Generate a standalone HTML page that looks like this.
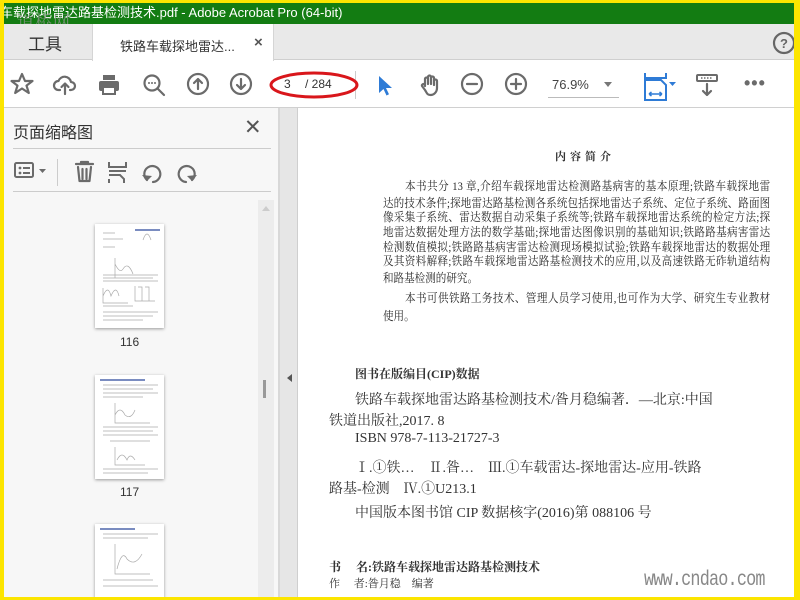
<!DOCTYPE html>
<html><head><meta charset="utf-8"><style>
*{margin:0;padding:0;box-sizing:border-box}
body{width:800px;height:600px;overflow:hidden;background:#fce500;position:relative;font-family:"Liberation Sans","Noto Sans CJK SC",sans-serif}
.a{position:absolute}
.serif{font-family:"Liberation Serif","Noto Serif CJK SC",serif;color:#333}
.ln{position:absolute;left:383px;width:440px;font-size:12px;white-space:nowrap;text-align:justify;text-align-last:justify;font-family:"Liberation Serif","Noto Serif CJK SC",serif;color:#2a2a2a;transform:scaleX(.88);transform-origin:left top}
svg{position:absolute;overflow:visible}
.ic{fill:none;stroke:#6b6b6b;stroke-width:2.2;stroke-linecap:round;stroke-linejoin:round}
</style></head><body>
<div class="a" style="left:4px;top:3px;width:790px;height:594px;background:#fff;overflow:hidden">
 <div class="a" style="left:-4px;top:0;width:794px;height:21px;background:#137c12;color:#fff;font-size:13px;line-height:20px;white-space:nowrap">车载探地雷达路基检测技术.pdf - Adobe Acrobat Pro (64-bit)</div>
 <div class="a" style="left:13px;top:5px;font-size:17px;color:rgba(150,150,150,.75);letter-spacing:1px;font-family:'Noto Serif CJK SC',serif">道桥网</div>
 <div class="a" style="left:0;top:21px;width:790px;height:36px;background:#e9e9e9;border-bottom:1px solid #cfcfcf"></div>
 <div class="a" style="left:24px;top:27px;font-size:17px;color:#333">工具</div>
 <div class="a" style="left:88px;top:21px;width:182px;height:37px;background:#fff;border-left:1px solid #d5d5d5;border-right:1px solid #d5d5d5"></div>
 <div class="a" style="left:116px;top:33px;font-size:13px;color:#333">铁路车载探地雷达...</div>
 <div class="a" style="left:250px;top:31px;font-size:15px;color:#555;font-weight:bold">×</div>
 <svg style="left:769px;top:29px" width="24" height="24"><circle cx="11" cy="11" r="10" class="ic" style="stroke:#666"/><text x="11" y="16" font-size="13" font-weight="bold" text-anchor="middle" fill="#666" font-family="Liberation Sans">?</text></svg>
 <div class="a" style="left:0;top:104px;width:790px;height:1px;background:#d0d0d0"></div>
 <svg style="left:6px;top:69px" width="26" height="26"><path class="ic" d="M12 2l3 7h7.5l-6 4.6 2.3 7.4L12 16.5 5.2 21l2.3-7.4-6-4.6H9z"/></svg>
 <svg style="left:49px;top:70px" width="26" height="26"><path class="ic" d="M7 17H5.5a4.5 4.5 0 0 1 0-9 6.5 6.5 0 0 1 12.5 1 4 4 0 0 1 0 8H17M12 21V11M8.5 14l3.5-3.5 3.5 3.5"/></svg>
 <svg style="left:93px;top:70px" width="26" height="26"><rect x="6" y="2" width="12" height="5" fill="#6b6b6b"/><rect x="2" y="8" width="20" height="10" rx="2" fill="#6b6b6b"/><rect x="6" y="14" width="12" height="7" fill="#fff" stroke="#6b6b6b" stroke-width="2"/></svg>
 <svg style="left:138px;top:70px" width="26" height="26"><circle cx="10" cy="10" r="7.5" class="ic"/><path class="ic" d="M15.5 15.5L22 22"/><circle cx="7" cy="10" r="1" fill="#6b6b6b"/><circle cx="10" cy="10" r="1" fill="#6b6b6b"/><circle cx="13" cy="10" r="1" fill="#6b6b6b"/></svg>
 <svg style="left:183px;top:70px" width="26" height="26"><circle cx="11" cy="11" r="10" class="ic"/><path class="ic" d="M11 16V6M7 10l4-4 4 4"/></svg>
 <svg style="left:226px;top:70px" width="26" height="26"><circle cx="11" cy="11" r="10" class="ic"/><path class="ic" d="M11 6v10M7 12l4 4 4-4"/></svg>
 <div class="a" style="left:266px;top:68px;width:86px;height:28px;border-right:1px solid #ccc"></div>
 <div class="a" style="left:280px;top:74px;font-size:12px;color:#333">3</div>
 <div class="a" style="left:301px;top:74px;font-size:12px;color:#333">/ 284</div>
 <svg style="left:265px;top:66px" width="95" height="34"><ellipse cx="45" cy="16" rx="43" ry="12" fill="none" stroke="#d9161b" stroke-width="3"/></svg>
 <svg style="left:372px;top:71px" width="20" height="24"><path d="M3 2v17l4.5-4 3 6.5 2.5-1.2-3-6.3h6z" fill="#2e7bd6"/></svg>
 <svg style="left:414px;top:70px" width="26" height="26"><path class="ic" d="M7 13V6a1.5 1.5 0 0 1 3 0v5V4a1.5 1.5 0 0 1 3 0v7V5a1.5 1.5 0 0 1 3 0v7-4a1.5 1.5 0 0 1 3 0v7c0 4-3 7-6.5 7S9 20 7 17l-3-4a1.5 1.5 0 0 1 2.5-1.5L7 13"/></svg>
 <svg style="left:457px;top:70px" width="26" height="26"><circle cx="11" cy="11" r="10" class="ic"/><path class="ic" d="M6 11h10"/></svg>
 <svg style="left:501px;top:70px" width="26" height="26"><circle cx="11" cy="11" r="10" class="ic"/><path class="ic" d="M6 11h10M11 6v10"/></svg>
 <div class="a" style="left:548px;top:74px;font-size:13px;color:#444">76.9%</div>
 <div class="a" style="left:600px;top:79px;border:4px solid transparent;border-top:5px solid #777"></div>
 <div class="a" style="left:544px;top:94px;width:71px;height:1px;background:#bbb"></div>
 <svg style="left:640px;top:70px" width="34" height="28"><path d="M1 0v5h21V0M1 7v20h21V12l-5-5z" fill="none" stroke="#2e7bd6" stroke-width="2"/><path d="M5 21h13M5 21l2.5-2M5 21l2.5 2M18 21l-2.5-2M18 21l-2.5 2" stroke="#2e7bd6" stroke-width="1.5" fill="none"/><path d="M25 9h7l-3.5 4z" fill="#2e7bd6"/></svg>
 <svg style="left:692px;top:71px" width="26" height="26"><rect x="1" y="1" width="20" height="6" rx="1" fill="none" stroke="#6b6b6b" stroke-width="2"/><path d="M5 4h12" stroke="#6b6b6b" stroke-width="1.5" stroke-dasharray="1.5 1.5"/><path class="ic" d="M11 10v11M7 17l4 4 4-4"/></svg>
 <div class="a" style="left:740px;top:70px;font-size:18px;color:#6b6b6b;font-weight:bold;letter-spacing:1px">•••</div>
 <div class="a" style="left:0;top:105px;width:274px;height:489px;background:#f7f7f7"></div>
 <div class="a" style="left:9px;top:116px;font-size:16px;color:#333">页面缩略图</div>
 <div class="a" style="left:240px;top:112px;font-size:21px;color:#555">✕</div>
 <div class="a" style="left:9px;top:145px;width:258px;height:1px;background:#ccc"></div>
 <div class="a" style="left:9px;top:188px;width:258px;height:1px;background:#ccc"></div>
 <svg style="left:10px;top:158px" width="36" height="22"><rect x="1" y="2" width="18" height="14" rx="1.5" fill="none" stroke="#6b6b6b" stroke-width="2"/><circle cx="6" cy="7" r="1.4" fill="#6b6b6b"/><circle cx="6" cy="12" r="1.4" fill="#6b6b6b"/><path d="M9 7h7M9 12h7" stroke="#6b6b6b" stroke-width="2"/><path d="M25 8h7l-3.5 4z" fill="#6b6b6b"/></svg>
 <div class="a" style="left:53px;top:156px;width:1px;height:27px;background:#ccc"></div>
 <svg style="left:70px;top:157px" width="22" height="24"><path class="ic" d="M2 4h17M7 4V2h7v2M4 7l1.5 14h10L17 7M8.5 9v10M12.5 9v10"/></svg>
 <svg style="left:103px;top:158px" width="22" height="24"><path d="M2 1v5h17V1M2 18v4M2 10h17M2 14h11l4 4v4" fill="none" stroke="#6b6b6b" stroke-width="2"/></svg>
 <svg style="left:137px;top:158px" width="24" height="24"><path class="ic" d="M6 19A8 8 0 1 1 12 21"/><path d="M1 14l5 6 5-5z" fill="#6b6b6b"/></svg>
 <svg style="left:170px;top:158px" width="24" height="24"><path class="ic" d="M18 19A8 8 0 1 0 12 21"/><path d="M23 14l-5 6-5-5z" fill="#6b6b6b"/></svg>
 <div class="a" style="left:254px;top:197px;width:16px;height:397px;background:#ececec"></div>
 <div class="a" style="left:258px;top:203px;border:4px solid transparent;border-bottom:5px solid #ccc;border-top:0"></div>
 <div class="a" style="left:259px;top:377px;width:3px;height:18px;background:#999"></div>
 <div class="a" style="left:91px;top:221px;width:69px;height:104px;background:#fff;box-shadow:0 1px 3px #999"></div>
 <svg style="left:91px;top:221px" width="69" height="104"><rect x="40" y="5" width="25" height="2" fill="#7a8cc0"/><g stroke="#aaa" stroke-width=".7" fill="none"><path d="M8 9h12M8 15h20M8 23h12M48 16q4-12 8 0M20 34v20h30M20 40q5 10 8 5 5-8 10 5M8 51h55M8 54h50M8 57h55M8 64v15h25M8 72q5-12 8 0 5-12 8 0M40 62v15h20M43 63h4v14M50 63h4v14M8 82h30M8 88h55M8 92h50M8 96h40"/></g></svg>
 <div class="a" style="left:116px;top:332px;font-size:12px;color:#333">116</div>
 <div class="a" style="left:91px;top:372px;width:69px;height:104px;background:#fff;box-shadow:0 1px 3px #999"></div>
 <svg style="left:91px;top:372px" width="69" height="104"><rect x="5" y="4" width="45" height="2" fill="#7a8cc0"/><g stroke="#aaa" stroke-width=".7" fill="none"><path d="M8 10h55M8 14h50M8 18h55M8 22h40M20 28v20h35M20 40q5-10 10 0 6 5 10-5M8 52h55M8 56h50M8 60h55M15 66h40M20 72v18h30M22 85q5-10 10 0 3-8 8 0M8 94h55M8 98h45"/></g></svg>
 <div class="a" style="left:116px;top:482px;font-size:12px;color:#333">117</div>
 <div class="a" style="left:91px;top:521px;width:69px;height:80px;background:#fff;box-shadow:0 1px 3px #999"></div>
 <svg style="left:91px;top:521px" width="69" height="80"><rect x="5" y="4" width="35" height="2" fill="#7a8cc0"/><g stroke="#aaa" stroke-width=".7" fill="none"><path d="M8 10h55M8 14h45M20 20v30h35M22 45q5-20 10-10 8 8 15-5M8 56h50M8 62h55"/></g></svg>
 <div class="a" style="left:274px;top:105px;width:2px;height:489px;background:#d8d8d8"></div>
 <div class="a" style="left:276px;top:105px;width:18px;height:489px;background:#e6e6e6;border-right:1px solid #cfcfcf"></div>
 <div class="a" style="left:283px;top:371px;border:4px solid transparent;border-right:5px solid #555;border-left:0"></div>
 <div class="a serif" style="left:551px;top:145px;font-size:11px;font-weight:bold;letter-spacing:4px">内容简介</div>
 <div class="ln" style="left:401px;width:415px;top:174px">本书共分 13 章,介绍车载探地雷达检测路基病害的基本原理;铁路车载探地雷</div>
 <div class="ln" style="left:379px;top:191px">达的技术条件;探地雷达路基检测各系统包括探地雷达子系统、定位子系统、路面图</div>
 <div class="ln" style="left:379px;top:205px">像采集子系统、雷达数据自动采集子系统等;铁路车载探地雷达系统的检定方法;探</div>
 <div class="ln" style="left:379px;top:220px">地雷达数据处理方法的数学基础;探地雷达图像识别的基础知识;铁路路基病害雷达</div>
 <div class="ln" style="left:379px;top:235px">检测数值模拟;铁路路基病害雷达检测现场模拟试验;铁路车载探地雷达的数据处理</div>
 <div class="ln" style="left:379px;top:249px">及其资料解释;铁路车载探地雷达路基检测技术的应用,以及高速铁路无砟轨道结构</div>
 <div class="ln" style="left:379px;top:266px;text-align-last:left">和路基检测的研究。</div>
 <div class="ln" style="left:401px;width:415px;top:286px">本书可供铁路工务技术、管理人员学习使用,也可作为大学、研究生专业教材</div>
 <div class="ln" style="left:379px;top:304px;text-align-last:left">使用。</div>
 <div class="a serif" style="left:351px;top:362px;font-size:12px;font-weight:bold">图书在版编目(CIP)数据</div>
 <div class="a serif" style="left:351px;top:386px;font-size:14px;white-space:nowrap">铁路车载探地雷达路基检测技术/昝月稳编著．—北京:中国</div>
 <div class="a serif" style="left:325px;top:407px;font-size:14px;white-space:nowrap">铁道出版社,2017. 8</div>
 <div class="a serif" style="left:351px;top:428px;font-size:14px">ISBN 978-7-113-21727-3</div>
 <div class="a serif" style="left:351px;top:454px;font-size:14px;white-space:nowrap">Ⅰ.①铁…　Ⅱ.昝…　Ⅲ.①车载雷达-探地雷达-应用-铁路</div>
 <div class="a serif" style="left:325px;top:475px;font-size:14px;white-space:nowrap">路基-检测　Ⅳ.①U213.1</div>
 <div class="a serif" style="left:351px;top:499px;font-size:14px">中国版本图书馆 CIP 数据核字(2016)第 088106 号</div>
 <div class="a serif" style="left:325px;top:555px;font-size:12px;font-weight:bold">书　 名:铁路车载探地雷达路基检测技术</div>
 <div class="a serif" style="left:325px;top:572px;font-size:11px">作　 者:昝月稳　编著</div>
 <div class="a" style="left:640px;top:566px;font-size:21px;color:#888;font-family:'Liberation Mono',monospace;transform:scaleX(.8);transform-origin:left;letter-spacing:-1px">www.cndao.com</div>
</div>
</body></html>
